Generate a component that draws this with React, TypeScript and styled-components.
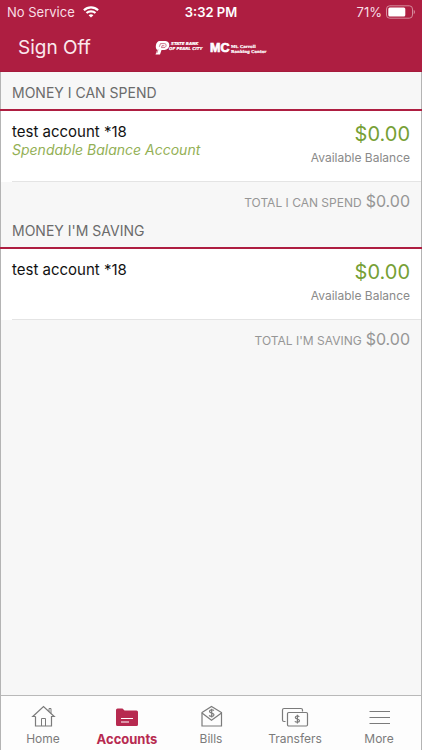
import React from "react";
import styled, { createGlobalStyle } from "styled-components";

const crimson = "#ae1e41";

const GlobalStyle = createGlobalStyle`
  * { box-sizing: border-box; }
  body {
    margin: 0;
    background: #f7f7f7;
    font-family: Inter, "Liberation Sans", sans-serif;
  }
  h2, p { margin: 0; font-weight: 400; }
`;

const Screen = styled.div`
  min-height: 100vh;
  display: flex;
  flex-direction: column;
  background: #f7f7f7;
  box-shadow: inset 1px 0 #b4b4b4, inset -1px 0 #b4b4b4;
`;

const TopBar = styled.header`
  background: ${crimson};
  color: #fff;
  border-bottom: 1px solid #a51b3c;
`;

const StatusBar = styled.div`
  display: grid;
  grid-template-columns: 1fr auto 1fr;
  align-items: center;
  height: 24px;
  padding: 0 7px;
  font-size: 13px;
  line-height: 16px;
  color: #f8dfe5;
`;

const StatusGroup = styled.div<{ $end?: boolean }>`
  display: flex;
  align-items: center;
  justify-content: ${(p) => (p.$end ? "flex-end" : "flex-start")};
  gap: ${(p) => (p.$end ? "4px" : "8px")};
`;

const Clock = styled.time`
  font-weight: 600;
  color: #fff;
`;

const TitleBar = styled.div`
  display: grid;
  grid-template-columns: 1fr auto 1fr;
  align-items: center;
  height: 47px;
  padding: 0 18px;
`;

const SignOff = styled.button`
  justify-self: start;
  padding: 0;
  border: 0;
  background: none;
  color: #fbe9ed;
  font: 400 19px/24px Inter, "Liberation Sans", sans-serif;
  cursor: pointer;
`;

const LogoArt = styled.svg`
  overflow: visible;
`;

const Content = styled.main`
  flex: 1;
`;

const SectionTitle = styled.h2`
  padding: 11px 12px 6px;
  border-bottom: 2px solid ${crimson};
  font-size: 14px;
  line-height: 20px;
  color: #6b6b6b;
`;

const AccountRow = styled.div`
  display: flex;
  justify-content: space-between;
  min-height: 71px;
  margin: 0 1px;
  padding: 12px 11px 0;
  background:
    linear-gradient(#e4e4e4, #e4e4e4) 11px 100% / 100% 1px no-repeat,
    #fff;
`;

const AccountName = styled.p`
  font-size: 15px;
  line-height: 18px;
  color: #111;
`;

const AccountKind = styled.p`
  font-size: 14px;
  line-height: 18px;
  font-style: italic;
  color: #93b055;
`;

const BalanceBlock = styled.div`
  text-align: right;
`;

const Amount = styled.p`
  font-size: 20px;
  line-height: 22px;
  color: #76a035;
`;

const AmountLabel = styled.p`
  font-size: 12px;
  line-height: 26px;
  color: #8a8a8a;
`;

const TotalRow = styled.p`
  display: flex;
  justify-content: flex-end;
  align-items: baseline;
  gap: 4px;
  min-height: 28px;
  padding: 12px 12px 0;
  font-size: 12px;
  line-height: 14px;
  color: #969696;
`;

const TotalAmount = styled.span`
  font-size: 16px;
`;

const TabBar = styled.nav`
  display: grid;
  grid-template-columns: repeat(5, 1fr);
  height: 55px;
  border-top: 1px solid #b9b9b9;
  margin: 0 1px;
  background: #fdfdfd;
`;

const Tab = styled.a<{ $active?: boolean }>`
  display: flex;
  flex-direction: column;
  align-items: center;
  padding-top: 8px;
  gap: 2px;
  text-decoration: none;
  font-size: ${(p) => (p.$active ? "13px" : "12px")};
  line-height: 18px;
  font-weight: ${(p) => (p.$active ? 700 : 400)};
  color: ${(p) => (p.$active ? "#b72a50" : "#7b7b7b")};
`;

const TabIcon = styled.svg`
  width: 28px;
  height: 24px;
  fill: none;
  stroke: currentColor;
  stroke-width: 1.2;
`;

function WifiIcon() {
  return (
    <svg width="16" height="12" viewBox="0 0 16 12" fill="none" stroke="#fff" strokeWidth="2.2" aria-label="Wi-Fi">
      <path d="M0.9 4.2C5 .3 11 .3 15.1 4.2" />
      <path d="M3.5 7C6 4.7 10 4.7 12.5 7" />
      <path d="M8 11.6L5.6 9.2C7 8 9 8 10.4 9.2Z" fill="#fff" stroke="none" />
    </svg>
  );
}

function BatteryIcon() {
  return (
    <svg width="29" height="14" viewBox="0 0 29 14" aria-label="Battery">
      <rect x="0.5" y="0.8" width="26" height="12.4" rx="3.2" fill="none" stroke="#d58a9b" />
      <rect x="2.3" y="2.6" width="17" height="8.8" rx="1.5" fill="#fff" />
      <path d="M27.7 4.7q1.3 .8 1.3 2.3t-1.3 2.3z" fill="#d58a9b" />
    </svg>
  );
}

function BankLogo() {
  return (
    <LogoArt width="112" height="18" viewBox="0 -1 112 18" fill="#fff" fontWeight="700">
      <path d="M4.5 1H10.5C16 1 15.5 10 9.5 10H6.5L5 14.5H0.5L2.2 10C-.5 8 1 1 4.5 1Z" />
      <path d="M4.3 6.8L5.5 3.6H9.5C12 3.6 11.5 7.6 9 7.6H6.5L7 5.7H9.3M3 9.5L1.8 13.2" fill="none" stroke={crimson} strokeWidth=".6" />
      <g fontSize="4" fontStyle="italic" fontFamily="DejaVu Sans, sans-serif" stroke="#fff" strokeWidth=".2">
        <text x="16" y="5.2">STATE BANK</text>
        <text x="14" y="9.8">OF PEARL CITY</text>
      </g>
      <text x="55" y="12.2" fontSize="12.5" fontFamily="Liberation Sans, sans-serif" stroke="#fff" strokeWidth=".7">MC</text>
      <g fontSize="4" fontFamily="DejaVu Serif, serif" stroke="#fff" strokeWidth=".2">
        <text x="76" y="8.3">Mt. Carroll</text>
        <text x="76" y="12.6">Banking Center</text>
      </g>
    </LogoArt>
  );
}

const icons = {
  Home: (
    <>
      <path d="M6.5 12.5H3.8L14.5 2.5L25.2 12.5H22.5V22H6.5V12.5" />
      <path d="M20 7.5V4.5H22V9.5M12.5 22V14.5H16.5V22" strokeWidth="1" />
    </>
  ),
  Accounts: (
    <>
      <path d="M3 6Q3 4.5 4.5 4.5H9.5L11.5 6.5H23.5Q25 6.5 25 8V20.5Q25 22 23.5 22H4.5Q3 22 3 20.5Z" fill="currentColor" stroke="none" />
      <path d="M8 14.5H20M8 18H16" stroke="#fff" />
    </>
  ),
  Bills: (
    <>
      <path d="M5 8.5L14.5 2.5L24.5 8.5V22H5Z" />
      <path d="M5 9L14.5 16.2L24.5 9" />
      <path d="M17 6.5C15.5 5.3 12.5 5.5 12.5 7.5S17 8.8 17 10.8S13.5 12.8 12 11.5M14.7 4.7V13.5" />
    </>
  ),
  Transfers: (
    <>
      <path d="M4.5 17.5H3Q1.5 17.5 1.5 16V6Q1.5 4.5 3 4.5H20Q21.5 4.5 21.5 6V7.5" />
      <rect x="6.5" y="8.5" width="20" height="13.5" rx="1.2" />
      <path d="M18.3 12.8C17 11.5 14.3 11.7 14.3 13.5S18.5 14.8 18.5 16.7S15 18.5 13.8 17.3M16.4 10.8V19.5" />
    </>
  ),
  More: <path d="M4.5 7.5H25M4.5 13.5H25M4.5 19.5H25" />,
};

type TabName = keyof typeof icons;

function AccountSection(props: { title: string; kind?: string; totalLabel: string }) {
  return (
    <section>
      <SectionTitle>{props.title}</SectionTitle>
      <AccountRow>
        <div>
          <AccountName>test account *18</AccountName>
          {props.kind && <AccountKind>{props.kind}</AccountKind>}
        </div>
        <BalanceBlock>
          <Amount>$0.00</Amount>
          <AmountLabel>Available Balance</AmountLabel>
        </BalanceBlock>
      </AccountRow>
      <TotalRow>
        <span>{props.totalLabel}</span>
        <TotalAmount>$0.00</TotalAmount>
      </TotalRow>
    </section>
  );
}

export default function App() {
  const [active, setActive] = React.useState<TabName>("Accounts");
  return (
    <Screen>
      <GlobalStyle />
      <TopBar>
        <StatusBar>
          <StatusGroup>
            <span>No Service</span>
            <WifiIcon />
          </StatusGroup>
          <Clock>3:32 PM</Clock>
          <StatusGroup $end>
            <span>71%</span>
            <BatteryIcon />
          </StatusGroup>
        </StatusBar>
        <TitleBar>
          <SignOff type="button">Sign Off</SignOff>
          <BankLogo />
        </TitleBar>
      </TopBar>
      <Content>
        <AccountSection title="MONEY I CAN SPEND" kind="Spendable Balance Account" totalLabel="TOTAL I CAN SPEND" />
        <AccountSection title="MONEY I'M SAVING" totalLabel="TOTAL I'M SAVING" />
      </Content>
      <TabBar>
        {(Object.keys(icons) as TabName[]).map((name) => (
          <Tab
            key={name}
            href={`#${name.toLowerCase()}`}
            $active={name === active}
            aria-current={name === active ? "page" : undefined}
            onClick={() => setActive(name)}
          >
            <TabIcon viewBox="0 0 28 24" aria-hidden="true">{icons[name]}</TabIcon>
            {name}
          </Tab>
        ))}
      </TabBar>
    </Screen>
  );
}
